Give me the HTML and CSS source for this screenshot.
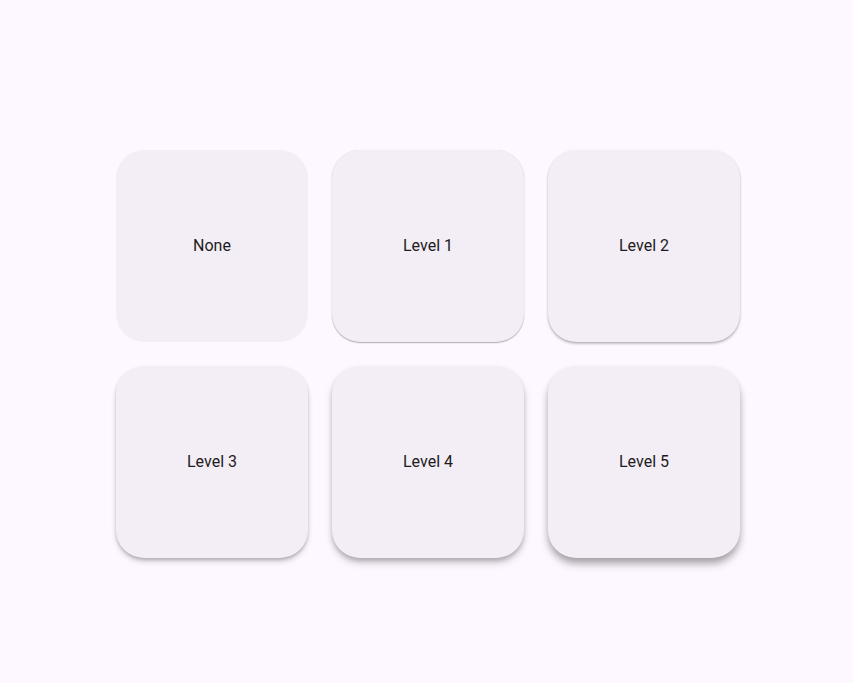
FILE: index.html
```html
<!DOCTYPE html>
<html>
<head>
<meta charset="utf-8">
<link rel="stylesheet" href="styles.css">
</head>
<body>
<div class="grid">
  <div class="card e0">None</div>
  <div class="card e1">Level 1</div>
  <div class="card e2">Level 2</div>
  <div class="card e3">Level 3</div>
  <div class="card e4">Level 4</div>
  <div class="card e5">Level 5</div>
</div>
</body>
</html>
```
FILE: styles.css
```css
html, body {
  margin: 0;
  background: #fdf7ff;
  height: 100%;
}
body {
  font-family: Roboto, "Liberation Sans", sans-serif;
  color: #1d1b20;
}
.grid {
  display: grid;
  grid-template-columns: repeat(3, 192px);
  grid-auto-rows: 192px;
  gap: 24px;
  padding: 150px 0 0 116px;
}
.card {
  background: #f3eef6;
  border-radius: 28px;
  display: flex;
  align-items: center;
  justify-content: center;
  font-size: 16px;
  letter-spacing: 0;
  padding-bottom: 2px;
  box-sizing: border-box;
}
.e1 { box-shadow: 0 1px 1.5px rgba(0,0,0,.22), 0 0.5px 1px rgba(0,0,0,.12); }
.e2 { box-shadow: 0 2px 3px rgba(0,0,0,.18), 0 1px 2px rgba(0,0,0,.16); }
.e3 { box-shadow: 0 4px 6px -1px rgba(0,0,0,.2), 0 2px 3px rgba(0,0,0,.15); }
.e4 { box-shadow: 0 5px 8px -1px rgba(0,0,0,.22), 0 3px 4px rgba(0,0,0,.15); }
.e5 { box-shadow: 0 7px 10px -1px rgba(0,0,0,.24), 0 4px 6px rgba(0,0,0,.16); }
```
